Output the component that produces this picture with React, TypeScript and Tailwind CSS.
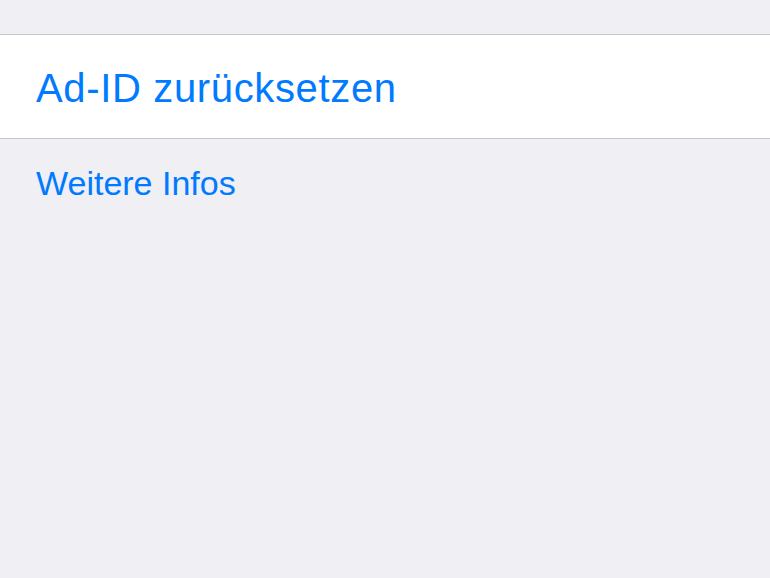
export default function App() {
  return (
    <div
      className="w-[770px] h-[578px] bg-[#efeff4] overflow-hidden"
      style={{ fontFamily: '"Liberation Sans", Arial, sans-serif' }}
    >
      <div className="h-[34px]" />
      <div className="h-[105px] bg-white border-y border-[#c8c7cc] flex items-center pl-[36px]">
        <span className="text-[40px] tracking-[0.65px] leading-none text-[#007aff] mt-[3px]">Ad-ID zurücksetzen</span>
      </div>
      <div className="pl-[36px] pt-[27px]">
        <span className="text-[34px] leading-none text-[#007aff]">Weitere Infos</span>
      </div>
    </div>
  );
}
